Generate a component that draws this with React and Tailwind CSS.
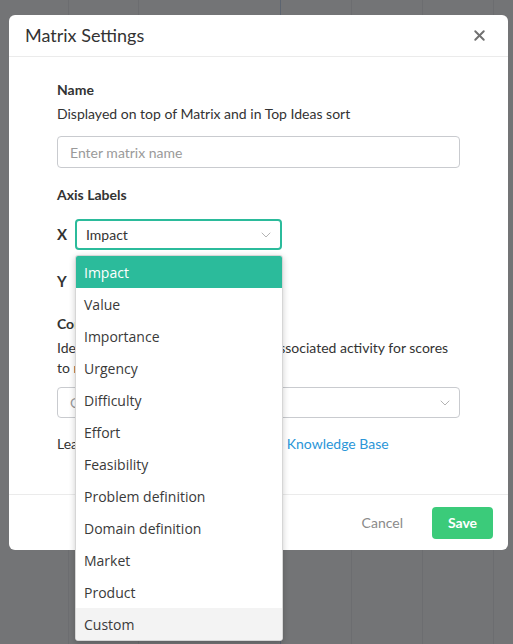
import React from "react";
import { X, ChevronDown } from "lucide-react";

const options = [
  "Impact",
  "Value",
  "Importance",
  "Urgency",
  "Difficulty",
  "Effort",
  "Feasibility",
  "Problem definition",
  "Domain definition",
  "Market",
  "Product",
  "Custom",
];

export default function App() {
  return (
    <div className="relative h-[644px] w-[513px] overflow-hidden bg-[#737476] font-['Lato',sans-serif] text-[#333]">
      {/* board columns behind the backdrop */}
      <div className="flex h-full">
        <div className="w-[69px] border-r border-[#6c6d70]" />
        <div className="w-[70px] border-r border-[#6c6d70]" />
        <div className="w-[142px] border-r border-[#5c6470]" />
        <div className="w-[71px] border-r border-[#6c6d70]" />
        <div className="w-[71px] border-r border-[#6c6d70]" />
        <div className="w-[71px] border-r border-[#6c6d70]" />
      </div>

      <div className="absolute left-[9px] top-[15px] w-[499px] rounded-md bg-white">
        <div className="flex h-[42px] items-center justify-between border-b border-[#ebebeb] px-4">
          <h2 className="text-[18px] text-[#333]">Matrix Settings</h2>
          <X size={17} strokeWidth={2.75} className="mr-[4px] text-[#707070]" />
        </div>

        <div className="px-12 pb-10 pt-[23px] text-[14px]">
          <p className="mb-1 font-bold leading-5">Name</p>
          <p className="leading-5">Displayed on top of Matrix and in Top Ideas sort</p>
          <div className="mt-3 flex h-[32px] items-center rounded border border-[#c9cbcf] px-3 text-[#9a9a9a]">
            Enter matrix name
          </div>

          <p className="mt-[17px] font-bold leading-5">Axis Labels</p>

          <div className="relative mt-[14px] flex items-center">
            <span className="w-[18px] text-[15px] font-bold">X</span>
            <div className="flex h-[31px] w-[207px] items-center justify-between rounded border-2 border-[#2bbb9b] pl-[9px] pr-[6px] text-[14px]">
              Impact
              <ChevronDown size={16} strokeWidth={1.5} className="text-[#b4b4b4]" />
            </div>

            <ul className="absolute left-[18px] top-[36px] z-10 w-[208px] overflow-hidden rounded-[3px] border border-[#d6d6d6] bg-white font-['Open_Sans',sans-serif] text-[14px] text-[#3a3a3a] shadow-[0_2px_6px_rgba(0,0,0,0.2)]">
              {options.map((o, i) => (
                <li
                  key={o}
                  className={
                    i === 0
                      ? "flex h-[32px] items-center bg-[#2bbb9b] px-2 text-white"
                      : i === options.length - 1
                      ? "flex h-[32px] items-center bg-[#f3f3f3] px-2"
                      : "flex h-[32px] items-center px-2"
                  }
                >
                  {o}
                </li>
              ))}
            </ul>
          </div>

          <div className="mt-[16px] flex items-center">
            <span className="w-[18px] text-[15px] font-bold">Y</span>
            <div className="flex h-[31px] w-[207px] items-center justify-between rounded border border-[#c9cbcf] pl-[10px] pr-[7px]">
              Value
              <ChevronDown size={16} strokeWidth={1.5} className="text-[#b4b4b4]" />
            </div>
          </div>

          <p className="mb-1 mt-[17px] font-bold leading-5">Confidence</p>
          <p className="leading-5">Ideas are hidden until they all have associated activity for scores to rank them.</p>
          <div className="mt-[9px] flex h-[31px] items-center justify-between rounded border border-[#c9cbcf] pl-3 pr-[6px] text-[#9a9a9a]">
            Choose a setting
            <ChevronDown size={16} strokeWidth={1.5} className="text-[#b4b4b4]" />
          </div>

          <p className="mt-[16px] leading-5">
            Learn more about the matrices in the <span className="text-[#2b96d8]">Knowledge Base</span>
          </p>
        </div>

        <div className="flex h-[56px] items-center justify-end gap-[29px] border-t border-[#ebebeb] pr-[15px] text-[14px]">
          <span className="text-[#8a8a8a]">Cancel</span>
          <button className="h-[32px] w-[61px] rounded bg-[#3bcb7a] font-bold text-white">Save</button>
        </div>
      </div>
    </div>
  );
}
